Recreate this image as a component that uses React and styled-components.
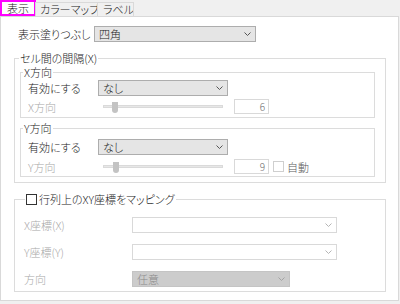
import React from "react";
import styled, { createGlobalStyle } from "styled-components";

const GlobalStyle = createGlobalStyle`
	html, body {
		margin: 0;
		padding: 0;
		background: #f0f0f0;
	}
	body {
		width: 400px;
		height: 304px;
		overflow: hidden;
		font-family: "Noto Sans CJK JP", "Noto Sans", sans-serif;
		font-size: 11px;
		font-weight: 300;
		font-feature-settings: "palt";
		color: #1a1a1a;
	}
`

const Window = styled.div`
	width: 400px;
	height: 304px;
	display: flex;
	flex-direction: column;
`

const TabBar = styled.div`
	display: flex;
	align-items: flex-end;
	height: 16px;
	position: relative;
	z-index: 1;
`

const Tab = styled.div`
	box-sizing: border-box;
	height: ${p => (p.$active ? "16px" : "14px")};
	width: ${p => p.$w}px;
	padding-left: ${p => p.$pl}px;
	line-height: ${p => (p.$active ? "12px" : "13px")};
	background: ${p => (p.$active ? "#fff" : "#f0f0f0")};
	border: ${p => (p.$active ? "2px solid #ff00ff" : "1px solid #d9d9d9")};
	border-bottom: ${p => (p.$active ? "2px solid #ff00ff" : "none")};
	margin-left: ${p => (p.$active ? "0" : "-1px")};
	white-space: nowrap;
	overflow: hidden;
`

const Panel = styled.div`
	box-sizing: border-box;
	width: 399px;
	height: 285px;
	background: #fff;
	border: 1px solid #d9d9d9;
	padding: 8px 12px 0 13px;
	display: flex;
	flex-direction: column;
`

const TopRow = styled.div`
	display: flex;
	align-items: center;
	height: 17px;
	padding-left: 4px;
`

const Label = styled.span`
	width: ${p => p.$w}px;
	flex: none;
	line-height: 16px;
	color: ${p => (p.$dim ? "#a8a8a8" : "#1a1a1a")};
	white-space: nowrap;
`

const Group = styled.fieldset`
	margin: ${p => p.$m || "0"};
	padding: ${p => p.$pad};
	border: 1px solid #dcdcdc;
	min-width: 0;
	display: flex;
	flex-direction: column;
	gap: ${p => p.$gap || 0}px;
`

const Legend = styled.legend`
	padding: 0 1px;
	margin-left: ${p => p.$ml}px;
	line-height: 14px;
	height: 14px;
	display: flex;
	align-items: center;
	white-space: nowrap;
`

const Row = styled.div`
	display: flex;
	align-items: center;
	height: ${p => p.$h || 16}px;
`

const ComboBox = styled.div`
	box-sizing: border-box;
	width: ${p => p.$w}px;
	height: ${p => p.$h || 16}px;
	flex: none;
	display: flex;
	align-items: center;
	justify-content: space-between;
	padding: 0 4px 0 4px;
	background: ${p => p.$bg};
	border: 1px solid ${p => p.$border};
	color: ${p => p.$color || "#1a1a1a"};
	line-height: 14px;
`

const Track = styled.div`
	position: relative;
	width: 120px;
	height: 3px;
	margin-left: 5px;
	margin-right: 5px;
	background: #e7e7e7;
	border: 1px solid #dadada;
	box-sizing: border-box;
`

const Thumb = styled.div`
	position: absolute;
	top: -4px;
	width: 6px;
	height: 11px;
	background: #c3c3c3;
	border-radius: 0 0 3px 3px;
`

const NumBox = styled.div`
	box-sizing: border-box;
	width: 35px;
	height: 15px;
	margin-left: 6px;
	border: 1px solid #d9d9d9;
	background: #fff;
	color: #6b6b6b;
	text-align: right;
	padding-right: 3px;
	line-height: 13px;
	font-size: 10px;
`

const CheckBox = styled.span`
	display: inline-block;
	box-sizing: border-box;
	width: 11px;
	height: 11px;
	border: 1px solid ${p => p.$c};
	background: #fff;
	margin-right: ${p => p.$mr}px;
	margin-left: ${p => p.$ml || 0}px;
	flex: none;
`

const AutoText = styled.span`
	color: #5a5a5a;
	line-height: 14px;
`

const Chevron = ({ color = "#555" }) => (
	<svg width="7" height="4" viewBox="0 0 7 4">
		<polyline points="0.5,0.5 3.5,3.5 6.5,0.5" fill="none" stroke={color} strokeWidth="1" />
	</svg>
)

const Combo = ({ w, bg, border, color, chev, children }) => (
	<ComboBox $w={w} $bg={bg} $border={border} $color={color}>
		<span>{children}</span>
		<Chevron color={chev} />
	</ComboBox>
)

const SliderRow = ({ label, thumb, value, auto }) => (
	<Row $h={15}>
		<Label $w={70} $dim>{label}</Label>
		<Track>
			<Thumb style={{ left: thumb }} />
		</Track>
		<NumBox>{value}</NumBox>
		{auto && (
			<>
				<CheckBox $c="#cfcfcf" $ml={4} $mr={3} />
				<AutoText>自動</AutoText>
			</>
		)}
	</Row>
)

export default function App() {
	return (
		<Window>
			<GlobalStyle />
			<TabBar>
				<Tab $active $w={36} $pl={5}>表示</Tab>
				<Tab $w={63} $pl={4}>カラーマップ</Tab>
				<Tab $w={37} $pl={5}>ラベル</Tab>
			</TabBar>
			<Panel>
				<TopRow>
					<Label $w={76}>表示塗りつぶし</Label>
					<Combo w={162} bg="#e5e5e5" border="#adadad" chev="#555">四角</Combo>
				</TopRow>

				<Group $m="9px 0 0 0" $pad="0 10px 5px 5px">
					<Legend $ml={-1}>セル間の間隔(X)</Legend>
					<Group $pad="1px 0 3px 7px" $gap={3}>
						<Legend $ml={-5}>X方向</Legend>
						<Row>
							<Label $w={70}>有効にする</Label>
							<Combo w={130} bg="#e5e5e5" border="#adadad" chev="#555">なし</Combo>
						</Row>
						<SliderRow label="X方向" thumb={8} value="6" />
					</Group>
					<Group $m="3px 0 0 0" $pad="4px 0 2px 7px" $gap={4}>
						<Legend $ml={-5}>Y方向</Legend>
						<Row>
							<Label $w={70}>有効にする</Label>
							<Combo w={130} bg="#e5e5e5" border="#adadad" chev="#555">なし</Combo>
						</Row>
						<SliderRow label="Y方向" thumb={9} value="9" auto />
					</Group>
				</Group>

				<Group $m="9px 0 0 0" $pad="11px 0 4px 9px" $gap={11}>
					<Legend $ml={1}>
						<CheckBox $c="#333" $mr={2} />
						行列上のXY座標をマッピング
					</Legend>
					<Row>
						<Label $w={108} $dim>X座標(X)</Label>
						<Combo w={205} bg="#fff" border="#d9d9d9" chev="#b5b5b5" />
					</Row>
					<Row>
						<Label $w={108} $dim>Y座標(Y)</Label>
						<Combo w={205} bg="#fff" border="#d9d9d9" chev="#b5b5b5" />
					</Row>
					<Row>
						<Label $w={108} $dim>方向</Label>
						<Combo w={158} bg="#cccccc" border="#c4c4c4" color="#8a8a8a" chev="#a3a3a3">任意</Combo>
					</Row>
				</Group>
			</Panel>
		</Window>
	);
}
